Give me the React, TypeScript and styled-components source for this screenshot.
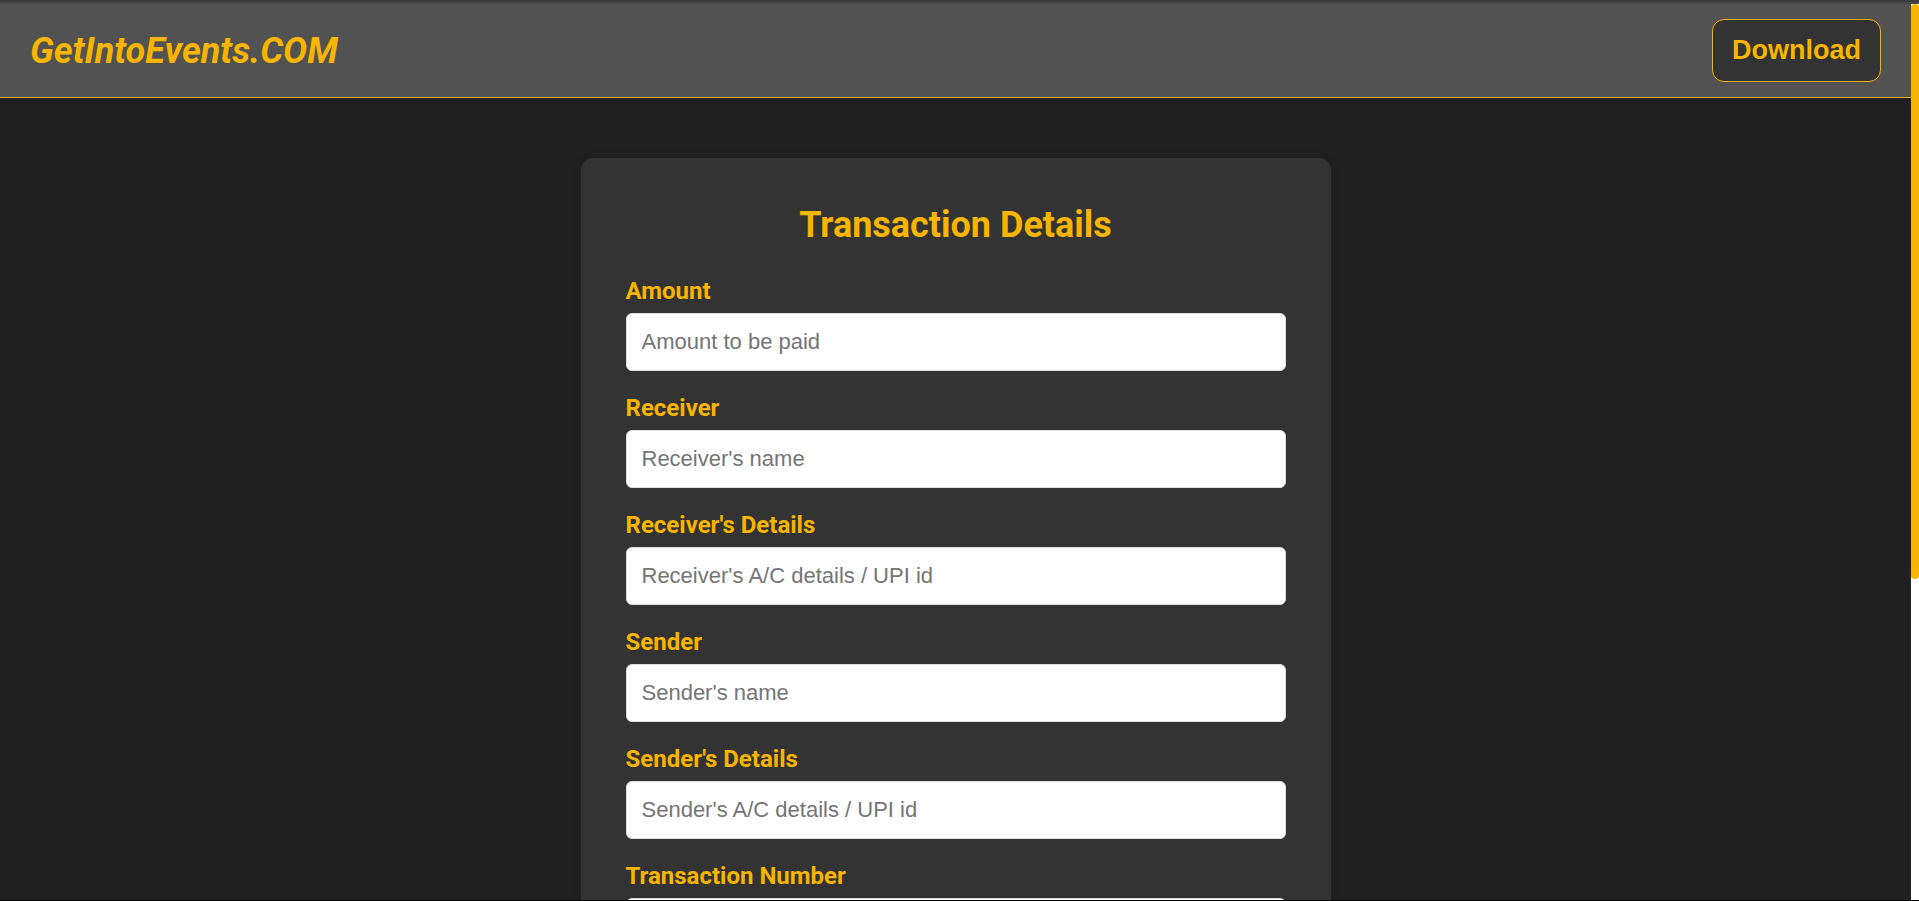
import React from "react";
import styled, { createGlobalStyle } from "styled-components";

const GlobalStyle = createGlobalStyle`
  *, *::before, *::after { box-sizing: border-box; }
  body { margin: 0; background: #202020; font-family: Roboto, sans-serif; }
`;

const Frame = styled.div`
  height: 100vh;
  display: flex;
  flex-direction: column;
  border-bottom: 1px solid #000;
`;

const TopEdge = styled.div`
  flex: none;
  height: 4px;
  background: #484848;
  border-top: 2px solid #3b3b3b;
`;

const Viewport = styled.div`
  flex: 1;
  min-height: 0;
  display: flex;
`;

const Page = styled.div`
  flex: 1;
  min-width: 0;
  overflow-y: auto;
  scrollbar-width: none;
  background: #202020;
`;

const ScrollTrack = styled.div`
  flex: none;
  width: 8px;
  background: #fff;
`;

const ScrollThumb = styled.div`
  height: 64.2%;
  border-radius: 4px;
  background: #f7b500;
`;

const Header = styled.header`
  display: flex;
  align-items: center;
  justify-content: space-between;
  padding: 15px 30px;
  background: #525252;
  border-bottom: 1px solid #f7b500;
`;

const Logo = styled.a`
  color: #f7b500;
  font-size: 36px;
  line-height: 42px;
  font-weight: 700;
  font-style: italic;
  text-decoration: none;
`;

const DownloadButton = styled.button`
  padding: 15px 19px;
  border: 1px solid #f7b500;
  border-radius: 12px;
  background: #333;
  color: #f7b500;
  font: 700 27px/31px "Liberation Sans", Arial, sans-serif;
  cursor: pointer;
`;

const Card = styled.form`
  max-width: 750px;
  margin: 60px auto;
  padding: 46px 45px;
  border-radius: 12px;
  background: #333;
  box-shadow: 0 0 10px rgba(0, 0, 0, 0.1);
`;

const Title = styled.h1`
  margin: 0 0 31px;
  color: #f7b500;
  font-size: 36px;
  line-height: 42px;
  font-weight: 700;
  text-align: center;
`;

const Field = styled.div`
  display: flex;
  flex-direction: column;
  gap: 8px;
  margin-bottom: 23px;
`;

const Label = styled.label`
  color: #f7b500;
  font-size: 24px;
  line-height: 28px;
  font-weight: 700;
`;

const Input = styled.input`
  width: 100%;
  height: 58px;
  padding: 0 15px;
  border: 1px solid #ddd;
  border-radius: 6px;
  background: #fff;
  color: #222;
  font: 22px "Liberation Sans", Arial, sans-serif;

  &::placeholder { color: #757575; opacity: 1; }
`;

const fields = [
  { id: "amount", label: "Amount", placeholder: "Amount to be paid" },
  { id: "receiver", label: "Receiver", placeholder: "Receiver's name" },
  { id: "receiver-details", label: "Receiver's Details", placeholder: "Receiver's A/C details / UPI id" },
  { id: "sender", label: "Sender", placeholder: "Sender's name" },
  { id: "sender-details", label: "Sender's Details", placeholder: "Sender's A/C details / UPI id" },
  { id: "transaction-number", label: "Transaction Number" },
];

export default function App() {
  return (
    <>
      <GlobalStyle />
      <Frame>
        <TopEdge />
        <Viewport>
          <Page>
            <Header>
              <Logo href="#">GetIntoEvents.COM</Logo>
              <DownloadButton type="button">Download</DownloadButton>
            </Header>
            <main>
              <Card>
                <Title>Transaction Details</Title>
                {fields.map((field) => (
                  <Field key={field.id}>
                    <Label htmlFor={field.id}>{field.label}</Label>
                    <Input id={field.id} type="text" placeholder={field.placeholder} />
                  </Field>
                ))}
              </Card>
            </main>
          </Page>
          <ScrollTrack>
            <ScrollThumb />
          </ScrollTrack>
        </Viewport>
      </Frame>
    </>
  );
}
